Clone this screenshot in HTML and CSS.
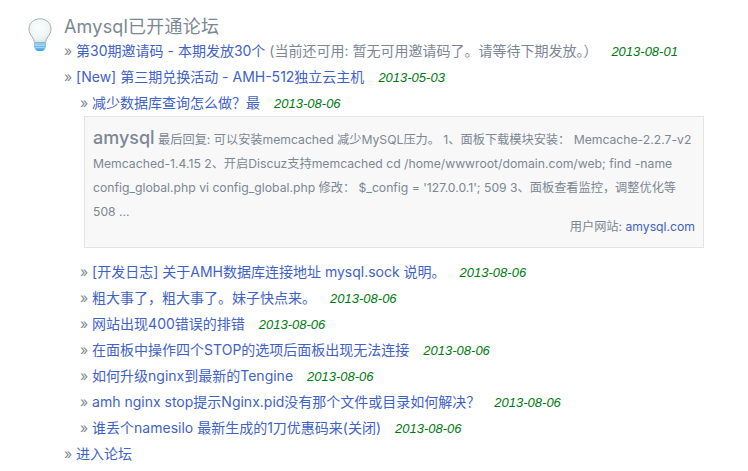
FILE: index.html
```html
<!DOCTYPE html>
<html lang="zh-CN">
<head>
<meta charset="utf-8">
<title>Amysql已开通论坛</title>
<link rel="stylesheet" href="styles.css">
</head>
<body>
<div class="panel">
  <div class="bulb">
    <svg width="24" height="34" viewBox="0 0 24 34">
      <defs>
        <radialGradient id="glass" cx="0.45" cy="0.35" r="0.75">
          <stop offset="0" stop-color="#fbfdfd"/>
          <stop offset="0.6" stop-color="#eef5f5"/>
          <stop offset="1" stop-color="#d3e0e0"/>
        </radialGradient>
        <linearGradient id="base" x1="0" y1="0" x2="0" y2="1">
          <stop offset="0" stop-color="#8fd0f5"/>
          <stop offset="1" stop-color="#3a9fe6"/>
        </linearGradient>
      </defs>
      <path d="M12 .8C5.6.8 1 5.2 1 11c0 3.4 1.5 5.8 3.2 8 1.2 1.600 1.800 3.200 2.300 5.500h11c.5-2.300 1.100-3.900 2.300-5.500 1.700-2.200 3.200-4.600 3.200-8C23 5.200 18.400.800 12 .800z" fill="url(#glass)" stroke="#a3afaf" stroke-width="1"/>
      <path d="M6 25h12v3.500l-1.500 3c-.6 1-2.200 1.500-4.500 1.500s-3.900-.5-4.500-1.500L6 28.500z" fill="url(#base)"/>
      <path d="M6.500 27.200h11M7.500 29.700h9" stroke="#c8e8fb" stroke-width=".8" fill="none"/>
    </svg>
  </div>
  <div class="content">
    <h2 class="title">Amysql已开通论坛</h2>
    <ul class="list">
      <li class="row"><span class="raquo">»</span> <a class="link" href="#">第30期邀请码 - 本期发放30个</a> <span class="note">(当前还可用: 暂无可用邀请码了。请等待下期发放。）</span><em class="date">2013-08-01</em></li>
      <li class="row"><span class="raquo">»</span> <a class="link" href="#">[New] 第三期兑换活动 - AMH-512独立云主机</a><em class="date">2013-05-03</em></li>
    </ul>
    <ul class="list sub">
      <li class="row"><span class="raquo">»</span> <a class="link" href="#">减少数据库查询怎么做？最</a><em class="date">2013-08-06</em></li>
    </ul>
    <div class="reply">
      <p class="reply-text"><strong class="author">amysql</strong> 最后回复: 可以安装memcached 减少MySQL压力。 1、面板下载模块安装： Memcache-2.2.7-v2 Memcached-1.4.15 2、开启Discuz支持memcached cd /home/wwwroot/domain.com/web; find -name config_global.php vi config_global.php 修改： $_config = '127.0.0.1'; 509 3、面板查看监控，调整优化等 508 ...</p>
      <p class="reply-site">用户网站: <a class="link" href="#">amysql.com</a></p>
    </div>
    <ul class="list sub">
      <li class="row"><span class="raquo">»</span> <a class="link" href="#">[开发日志] 关于AMH数据库连接地址 mysql.sock 说明。</a><em class="date">2013-08-06</em></li>
      <li class="row"><span class="raquo">»</span> <a class="link" href="#">粗大事了，粗大事了。妹子快点来。</a><em class="date">2013-08-06</em></li>
      <li class="row"><span class="raquo">»</span> <a class="link" href="#">网站出现400错误的排错</a><em class="date">2013-08-06</em></li>
      <li class="row"><span class="raquo">»</span> <a class="link" href="#">在面板中操作四个STOP的选项后面板出现无法连接</a><em class="date">2013-08-06</em></li>
      <li class="row"><span class="raquo">»</span> <a class="link" href="#">如何升级nginx到最新的Tengine</a><em class="date">2013-08-06</em></li>
      <li class="row"><span class="raquo">»</span> <a class="link" href="#">amh nginx stop提示Nginx.pid没有那个文件或目录如何解决？</a><em class="date">2013-08-06</em></li>
      <li class="row"><span class="raquo">»</span> <a class="link" href="#">谁丢个namesilo 最新生成的1刀优惠码来(关闭)</a><em class="date">2013-08-06</em></li>
    </ul>
    <ul class="list">
      <li class="row"><span class="raquo">»</span> <a class="link" href="#">进入论坛</a></li>
    </ul>
  </div>
</div>
</body>
</html>
```
FILE: styles.css
```css
html, body {
  margin: 0;
  padding: 0;
  background: #fff;
}
body {
  font-family: "Inter", "Noto Sans CJK SC", sans-serif;
  font-size: 14px;
  color: #7b8794;
}
.panel {
  display: flex;
  align-items: flex-start;
  padding: 14px 44px 0 28px;
}
.bulb {
  flex: none;
  width: 36px;
  padding-top: 4px;
  line-height: 0;
}
.content {
  flex: 1;
  min-width: 0;
}
.title {
  margin: 0;
  padding-top: 2px;
  font-size: 18px;
  font-weight: normal;
  line-height: 22px;
  letter-spacing: .2px;
  color: #7b8794;
}
.list {
  list-style: none;
  margin: 0;
  padding: 0;
}
.sub {
  padding-left: 16px;
}
.row {
  height: 26px;
  line-height: 26px;
  white-space: nowrap;
}
.raquo {
  color: #7b8794;
}
.link {
  color: #3f62c8;
  text-decoration: none;
}
.note {
  color: #7b8794;
}
.date {
  margin-left: 14px;
  font-family: "Liberation Sans", sans-serif;
  font-size: 13px;
  font-style: italic;
  color: #007a10;
}
.reply {
  margin: 0 0 11px 20px;
  height: 130px;
  padding: 0 8px;
  border: 1px solid #e3e3e3;
  background: #f8f8f8;
}
.reply-text {
  margin: 11px 0 0;
  font-size: 12.2px;
  line-height: 24px;
}
.author {
  font-size: 18px;
  font-weight: 500;
  line-height: 1;
  color: #7b8794;
}
.reply-site {
  margin: -9px 0 0;
  font-size: 12.2px;
  line-height: 24px;
  text-align: right;
}
```
